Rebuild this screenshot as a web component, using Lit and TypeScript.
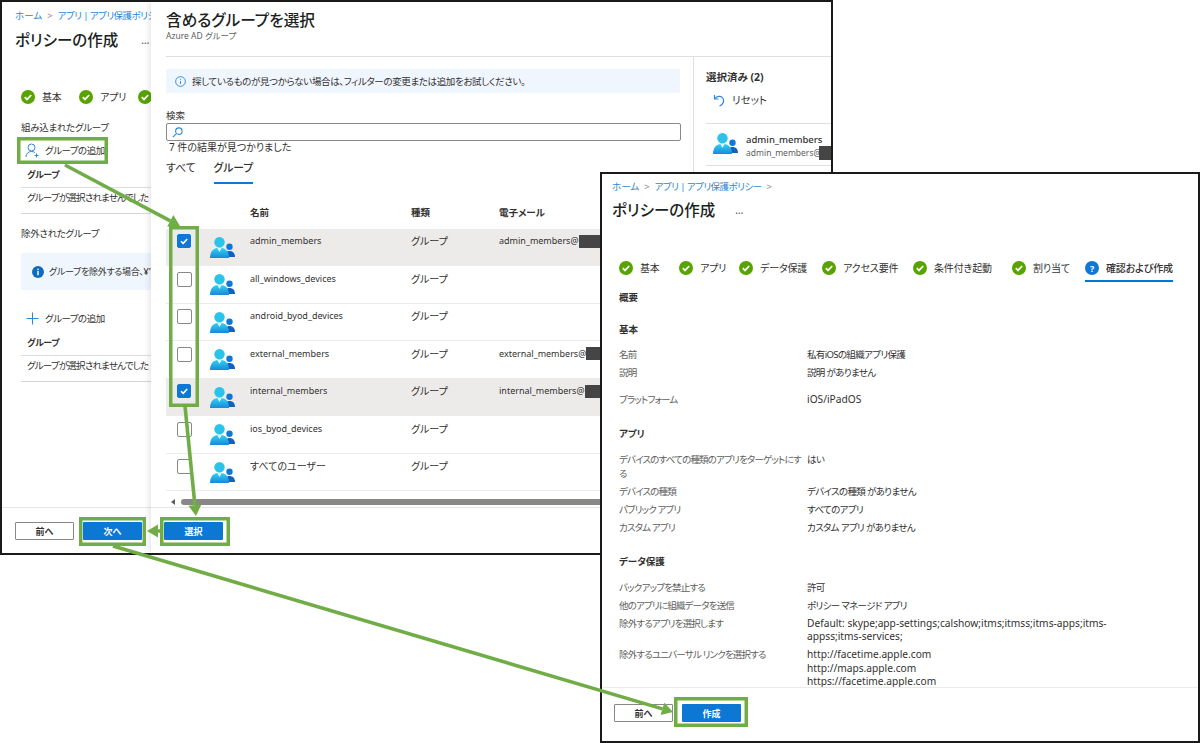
import { LitElement, html, css, svg } from "lit";
import { customElement } from "lit/decorators.js";

const GREEN = "#70ad47";

const check = () => html`<svg class="stepicon" viewBox="0 0 14 14"><circle cx="7" cy="7" r="7" fill="#57a300"/><path d="M3.8 7.2l2.2 2.2 4.2-4.4" fill="none" stroke="#fff" stroke-width="1.8"/></svg>`;

const groupIcon = (cls: string) => html`<svg class=${cls} viewBox="0 0 25 21">
  <defs><linearGradient id="gi" x1="0" y1="0" x2="0" y2="1"><stop offset="0" stop-color="#32d4f5"/><stop offset="1" stop-color="#1988d9"/></linearGradient></defs>
  <circle cx="19.500" cy="9.800" r="3.200" fill="#0f78d4"/>
  <path d="M14.500 20c0-4 1.800-6 5-6s5.500 2 5.500 6z" fill="#0f62c0"/>
  <circle cx="9.500" cy="5.200" r="5.200" fill="#2cc3ea"/>
  <path d="M0 21c0-6.300 3.200-10.200 9.500-10.200S19 14.700 19 21z" fill="url(#gi)"/>
  <path d="M7.300 11l2.200 4 2.200-4z" fill="#fff" opacity=".85"/>
</svg>`;

const rows = [
  { n: "admin_members", m: "admin_members@", on: true },
  { n: "all_windows_devices", m: "", on: false },
  { n: "android_byod_devices", m: "", on: false },
  { n: "external_members", m: "external_members@", on: false },
  { n: "internal_members", m: "internal_members@", on: true },
  { n: "ios_byod_devices", m: "", on: false },
  { n: "すべてのユーザー", m: "", on: false },
];

const steps = ["基本", "アプリ", "データ保護", "アクセス要件", "条件付き起動", "割り当て"];

type Row = [string, string[], boolean?];
const sections: { h: string; rows: Row[] }[] = [
  { h: "基本", rows: [["名前", ["私有iOSの組織アプリ保護"]], ["説明", ["説明 がありません"]], ["プラットフォーム", ["iOS/iPadOS"], true]] },
  { h: "アプリ", rows: [["デバイスのすべての種類のアプリをターゲットにする", ["はい"]], ["デバイスの種類", ["デバイスの種類 がありません"]], ["パブリック アプリ", ["すべてのアプリ"]], ["カスタム アプリ", ["カスタム アプリ がありません"]]] },
  { h: "データ保護", rows: [["バックアップを禁止する", ["許可"]], ["他のアプリに組織データを送信", ["ポリシー マネージド アプリ"]], ["除外するアプリを選択します", ["Default: skype;app-settings;calshow;itms;itmss;itms-apps;itms-appss;itms-services;"]], ["除外するユニバーサル リンクを選択する", ["http://facetime.apple.com", "http://maps.apple.com", "https://facetime.apple.com"]]] },
];

const isLatin = (s: string) => /^[\x00-\x7f]+$/.test(s);

function arrow(x1: number, y1: number, x2: number, y2: number) {
  const d = Math.hypot(x2 - x1, y2 - y1);
  const ux = (x2 - x1) / d, uy = (y2 - y1) / d;
  const bx = x2 - ux * 11, by = y2 - uy * 11;
  const px = -uy * 6.5, py = ux * 6.5;
  return svg`<line x1=${x1} y1=${y1} x2=${bx} y2=${by} stroke=${GREEN} stroke-width="3.6"/>
    <polygon points="${x2},${y2} ${bx + px},${by + py} ${bx - px},${by - py}" fill=${GREEN}/>`;
}

/* outer edges of the frame are given; the stroke is drawn inside them */
const box = (l: number, t: number, r: number, b: number) =>
  svg`<rect x=${l + 1.75} y=${t + 1.75} width=${r - l - 3.5} height=${b - t - 3.5} fill="none" stroke=${GREEN} stroke-width="3.5"/>`;

@customElement("app-root")
export class AppRoot extends LitElement {
  static styles = css`
    :host { display: block; width: 1200px; height: 743px; position: relative; overflow: hidden; background: #fff;
      font-family: "Noto Sans", "Noto Sans CJK JP", sans-serif; font-size: 9.5px; color: #323130; font-feature-settings: "palt"; line-height: 13px; }
    * { box-sizing: border-box; }
    .win { position: absolute; background: #fff; border: 2px solid #1a1a1a; overflow: hidden; }
    .w1 { left: 0; top: 0; width: 833px; height: 555px; }
    .w2 { left: 600px; top: 172px; width: 600px; height: 571px; display: flex; flex-direction: column; }
    .blade { height: 100%; display: flex; flex-direction: column; }
    .crumb { display: flex; align-items: center; height: 14px; color: #2b88d8; white-space: nowrap; gap: 5px; font-size: 9.5px; }
    .crumb i { font-style: normal; color: #8a8886; }
    .crumb .tight { letter-spacing: -.55px; }
    .c1 { margin: 6px 0 0 13px; }
    .title { font-size: 15.5px; font-weight: 500; line-height: 24px; height: 24px; display: flex; align-items: center; color: #201f1e; white-space: nowrap; }
    .t1 { margin: 6px 0 0 13px; }
    .dots { font-size: 10px; color: #605e5c; }
    .d1 { margin-left: 23px; }
    .d2 { margin-left: 20px; }
    .stepper { display: grid; align-items: start; white-space: nowrap; font-size: 10px; letter-spacing: -.15px; }
    .s1 { grid-template-columns: 58px 59px auto; margin-top: 38px; height: 15px; }
    .s2 { grid-template-columns: 60px 60px 83px 91px 99px 73px 88px; margin: 39px 0 0 17px; }
    .step { display: flex; align-items: center; gap: 7px; height: 21px; padding-bottom: 5px; border-bottom: 2px solid transparent; }
    .step.cur { border-bottom-color: #0078d4; font-weight: 500; }
    .stepicon { width: 14px; height: 14px; flex: none; }
    .q { width: 14px; height: 14px; border-radius: 50%; background: #0f78d4; color: #fff; font-size: 9px; font-weight: 700; display: flex; align-items: center; justify-content: center; }
    .lab { height: 14px; display: flex; align-items: center; color: #323130; white-space: nowrap; letter-spacing: -.3px; }
    .lb1 { margin-top: 15px; }
    .lb2 { margin-top: 12px; }
    .add { height: 20px; display: flex; align-items: center; gap: 5px; margin: 6px 0 0 4px; white-space: nowrap; letter-spacing: -.5px; }
    .add svg { width: 15px; height: 15px; flex: none; }
    .add.a2 { margin-top: 18px; }
    .thead { font-weight: 700; height: 20px; padding: 0 0 6px 6px; margin-top: 8px; border-bottom: 1px solid #e1dfdd; white-space: nowrap; display: flex; align-items: center; font-size: 9px; letter-spacing: -.4px; }
    .empty { height: 26px; padding: 3px 0 0 6px; border-bottom: 1px solid #d8d6d4; white-space: nowrap; display: flex; align-items: flex-start; letter-spacing: -.8px; }
    .left { padding-left: 19px; flex: none; }
    .info { margin-top: 13px; height: 37px; background: #f0f6fe; display: flex; align-items: center; gap: 5px; padding-left: 11px; white-space: nowrap; font-size: 9px; letter-spacing: -.3px; }
    .info svg { width: 12px; height: 12px; flex: none; }
    .grow { flex: 1; }
    .foot { border-top: 1px solid #e8e6e4; height: 46px; padding: 14px 0 0 13px; display: flex; gap: 9px; flex: none; }
    .btn { width: 59px; height: 18px; display: flex; align-items: center; justify-content: center; font-size: 9px; font-weight: 700; border-radius: 1px; }
    .sec { border: 1.5px solid #8a8886; background: #fff; color: #323130; }
    .pri { background: #0c78d4; color: #fff; }
    .panel { position: absolute; left: 149px; top: 0; right: 0; bottom: 0; background: #fff; box-shadow: -2px 0 6px rgba(0,0,0,.1); display: flex; flex-direction: column; }
    .phead { height: 55px; margin-left: 15px; padding-top: 7px; border-bottom: 1px solid #e1dfdd; flex: none; }
    .ptitle { font-size: 15.7px; font-weight: 500; height: 22px; line-height: 22px; color: #201f1e; white-space: nowrap; }
    .psub { font-size: 8.5px; height: 12px; line-height: 12px; color: #605e5c; margin-top: -1px; }
    .pbody { flex: 1; display: flex; min-height: 0; margin-left: 15px; }
    .main { width: 527px; flex: none; overflow: hidden; }
    .ibar { margin-top: 12px; width: 514px; height: 24px; background: #f0f6fe; display: flex; align-items: center; gap: 6px; padding-left: 9px; white-space: nowrap; letter-spacing: -.37px; }
    .ibar svg { width: 11px; height: 11px; flex: none; }
    .slab { height: 12px; margin-top: 16px; display: flex; align-items: center; }
    .inp { margin-top: 2px; width: 515px; height: 18px; border: 1px solid #8a8886; border-radius: 2px; display: flex; align-items: center; padding-left: 5px; }
    .inp svg { width: 11px; height: 11px; }
    .res { height: 12px; padding-left: 3px; display: flex; align-items: center; font-size: 10px; }
    .tabs { display: flex; gap: 18px; margin-top: 8px; height: 23px; }
    .tab { height: 23px; display: flex; align-items: flex-start; line-height: 14px; font-size: 10.8px; }
    .tab.on { font-weight: 500; border-bottom: 2px solid #0f78d4; }
    .grid { display: grid; grid-template-columns: 44px 40px 161px 88px 1fr; align-items: start; }
    .ghead { margin-top: 21px; height: 14px; font-weight: 700; font-size: 9.5px; align-items: center; }
    .ghead > :first-child { grid-column: 3; }
    .tbody { margin-top: 9.5px; }
    .trow { height: 37.5px; border-bottom: 1px solid #edebe9; white-space: nowrap; font-size: 9px; }
    .trow.on { background: #edebe9; }
    .trow > div { margin-top: 5.5px; line-height: 14px; height: 14px; display: flex; align-items: center; }
    .trow > .jp { font-size: 10px; }
    .cb { margin-left: 11px; width: 15px; border: 1.5px solid #8a8886; border-radius: 2px; justify-content: center; background: #fff; }
    .trow > .cb { height: 15px; }
    .trow > .cb.on { background: #0f78d4; border-color: #0f78d4; width: 14px; height: 14px; }
    .cb svg { width: 10px; height: 10px; }
    .gi { width: 25px; height: 21px; }
    .trow > .icell { height: 21px; margin-top: 8px; }
    .mask { display: inline-block; width: 24px; height: 13px; background: #454545; flex: none; }
    .scroll { margin-top: 8px; height: 6px; display: flex; align-items: center; gap: 6px; padding-left: 5px; }
    .tri { width: 0; height: 0; border-style: solid; border-width: 3px 4px 3px 0; border-color: transparent #605e5c transparent transparent; }
    .thumb { width: 500px; height: 6px; border-radius: 3px; background: #8a8886; }
    .side { flex: 1; border-left: 1px solid #e1dfdd; padding-left: 12px; overflow: hidden; }
    .sh { margin-top: 13px; height: 14px; font-weight: 700; font-size: 10.5px; display: flex; align-items: center; white-space: nowrap; }
    .reset { margin: 7px 0 0 7px; height: 18px; display: flex; align-items: center; gap: 7px; font-size: 10.5px; }
    .reset svg { width: 12px; height: 13px; }
    .sel { margin-top: 14px; height: 43px; border-top: 1px solid #e1dfdd; border-bottom: 1px solid #e1dfdd; display: flex; gap: 8px; padding: 9px 0 0 7px; white-space: nowrap; }
    .sel .gi { flex: none; }
    .sel b { display: block; font-weight: 500; font-size: 9.5px; line-height: 12px; margin-top: 1px; }
    .sel span { display: flex; font-size: 8.5px; line-height: 13px; color: #605e5c; }
    .sel .mask { width: 20px; height: 14px; margin-left: -2px; }
    .content { flex: 1; min-height: 0; overflow: hidden; padding: 0 0 0 17px; }
    .c2 { margin: 5px 0 0 10px; }
    .t2 { margin: 5px 0 0 10px; }
    .h { font-weight: 700; font-size: 9.5px; height: 14px; line-height: 14px; white-space: nowrap; }
    .h0 { margin-top: 9px; }
    .hs { margin: 16px 0 12px; }
    .hs.first { margin: 18px 0 11px; }
    .r { display: grid; grid-template-columns: 188px 1fr; padding-bottom: 4.5px; width: 508px; line-height: 13.5px; }
    .r.gap { padding-top: 9px; }
    .r > div:first-child { color: #605e5c; letter-spacing: -.82px; padding-right: 6px; }
    .v { letter-spacing: -.65px; }
    .v.lat { font-size: 10.2px; letter-spacing: 0; }
    .f2 { flex: none; border-top: 1px solid #edebe9; height: 54px; padding: 16px 0 0 12px; display: flex; gap: 9px; }
    .over { position: absolute; left: 0; top: 0; width: 1200px; height: 743px; pointer-events: none; }
  `;

  render() {
    return html`
      <div class="win w1">
        <div class="blade">
          <div class="crumb c1"><span>ホーム</span><i>&gt;</i><span class="tight">アプリ | アプリ保護ポリシー</span></div>
          <div class="title t1">ポリシーの作成<span class="dots d1">…</span></div>
          <div class="left">
            <div class="stepper s1">
              <div class="step">${check()}基本</div>
              <div class="step">${check()}アプリ</div>
              <div class="step">${check()}データ保護</div>
            </div>
            <div class="lab lb1">組み込まれたグループ</div>
            <div class="add">
              <svg viewBox="0 0 15 15" fill="none" stroke="#2b88d8" stroke-width="1"><circle cx="6.5" cy="4.5" r="3.5"/><path d="M1 14c0-3.5 2.500-5.500 5.500-5.500 1.500 0 2.600.4 3.500 1.100"/><path d="M11.500 10.500v4M9.500 12.500h4"/></svg>
              グループの追加
            </div>
            <div class="thead">グループ</div>
            <div class="empty">グループが選択されませんでした</div>
            <div class="lab lb2">除外されたグループ</div>
            <div class="info">
              <svg viewBox="0 0 12 12"><circle cx="6" cy="6" r="6" fill="#0f6cbd"/><rect x="5.3" y="5" width="1.4" height="4.3" fill="#fff"/><rect x="5.3" y="2.7" width="1.4" height="1.4" fill="#fff"/></svg>
              グループを除外する場合、¥"
            </div>
            <div class="add a2">
              <svg viewBox="0 0 15 15" fill="none" stroke="#2b88d8" stroke-width="1.1"><path d="M7.500 1.500v12M1.500 7.500h12"/></svg>
              グループの追加
            </div>
            <div class="thead">グループ</div>
            <div class="empty">グループが選択されませんでした</div>
          </div>
          <div class="grow"></div>
          <div class="foot">
            <div class="btn sec">前へ</div>
            <div class="btn pri">次へ</div>
          </div>
        </div>
        <div class="panel">
          <div class="phead">
            <div class="ptitle">含めるグループを選択</div>
            <div class="psub">Azure AD グループ</div>
          </div>
          <div class="pbody">
            <div class="main">
              <div class="ibar">
                <svg viewBox="0 0 12 12" fill="none" stroke="#2b88d8"><circle cx="6" cy="6" r="5.3"/><path d="M6 5.300v3.400M6 3v1.200"/></svg>
                探しているものが見つからない場合は、フィルターの変更または追加をお試しください。
              </div>
              <div class="slab">検索</div>
              <div class="inp"><svg viewBox="0 0 12 12" fill="none" stroke="#2b88d8" stroke-width="1.2"><circle cx="7.5" cy="4.5" r="3.5"/><path d="M5 7l-4 4"/></svg></div>
              <div class="res">7 件の結果が見つかりました</div>
              <div class="tabs"><div class="tab">すべて</div><div class="tab on">グループ</div></div>
              <div class="grid ghead"><div>名前</div><div>種類</div><div>電子メール</div></div>
              <div class="tbody">
                ${rows.map((r) => html`
                  <div class="grid trow ${r.on ? "on" : ""}">
                    <div class="cb ${r.on ? "on" : ""}">${r.on ? html`<svg viewBox="0 0 10 10" fill="none" stroke="#fff" stroke-width="1.6"><path d="M2 5.200l2.200 2.200L8.200 3"/></svg>` : ""}</div>
                    <div class="icell">${groupIcon("gi")}</div>
                    <div class=${isLatin(r.n) ? "" : "jp"}>${r.n}</div>
                    <div class="jp">グループ</div>
                    <div>${r.m}${r.m ? html`<span class="mask"></span>` : ""}</div>
                  </div>`)}
              </div>
              <div class="scroll"><span class="tri"></span><span class="thumb"></span></div>
            </div>
            <div class="side">
              <div class="sh">選択済み (2)</div>
              <div class="reset">
                <svg viewBox="0 0 12 13" fill="none" stroke="#2b88d8" stroke-width="1.2"><path d="M1.500 1v4h4"/><path d="M1.800 4.800C3 2.900 5 2 7 2.400c2.600.5 4 2.800 3.500 5.200-.4 2-1.900 3.500-4 4.400"/></svg>
                リセット
              </div>
              <div class="sel">
                ${groupIcon("gi")}
                <div><b>admin_members</b><span>admin_members@<i class="mask"></i></span></div>
              </div>
            </div>
          </div>
          <div class="foot"><div class="btn pri">選択</div></div>
        </div>
      </div>

      <div class="win w2">
        <div class="crumb c2"><span>ホーム</span><i>&gt;</i><span class="tight">アプリ | アプリ保護ポリシー</span><i>&gt;</i></div>
        <div class="title t2">ポリシーの作成<span class="dots d2">…</span></div>
        <div class="stepper s2">
          ${steps.map((s) => html`<div class="step">${check()}${s}</div>`)}
          <div class="step cur"><span class="q">?</span>確認および作成</div>
        </div>
        <div class="content">
          <div class="h h0">概要</div>
          ${sections.map((s, i) => html`
            <div class="h hs ${i === 0 ? "first" : ""}">${s.h}</div>
            ${s.rows.map((r) => html`
              <div class="r ${r[2] ? "gap" : ""}"><div>${r[0]}</div><div>${r[1].map((v) => html`<div class="v ${isLatin(v) ? "lat" : ""}">${v}</div>`)}</div></div>`)}
          `)}
        </div>
        <div class="f2">
          <div class="btn sec">前へ</div>
          <div class="btn pri">作成</div>
        </div>
      </div>

      <svg class="over" viewBox="0 0 1200 743">
        ${box(17, 137, 108, 164)}
        ${box(169, 226, 199, 407)}
        ${box(79, 517, 146, 546)}
        ${box(160, 517, 230, 546)}
        ${box(674, 697, 748, 727)}
        ${arrow(65, 165, 180, 226)}
        ${arrow(185, 406, 196, 516)}
        ${arrow(160, 531, 147, 531)}
        ${arrow(113, 546, 673, 712)}
      </svg>
    `;
  }
}
